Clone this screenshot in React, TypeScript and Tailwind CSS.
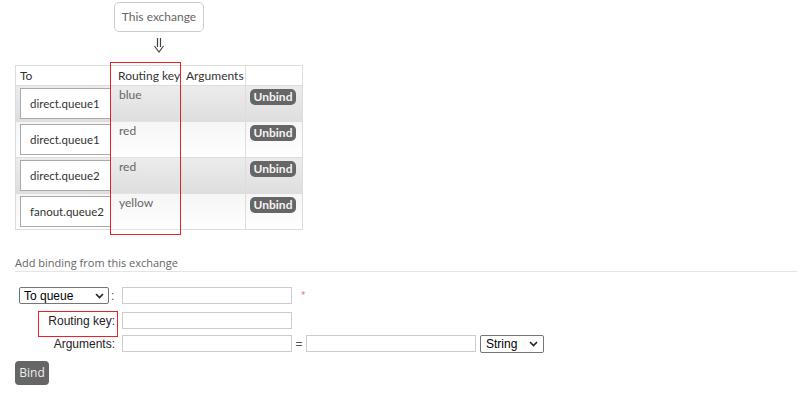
import React from "react";

const rows = [
  { q: "direct.queue1", k: "blue", alt: true },
  { q: "direct.queue1", k: "red", alt: false },
  { q: "direct.queue2", k: "red", alt: true },
  { q: "fanout.queue2", k: "yellow", alt: false },
];

function Chevron() {
  return (
    <svg width="9" height="6" viewBox="0 0 9 6" className="shrink-0">
      <path d="M1 1 L4.5 4.5 L8 1" fill="none" stroke="#222" strokeWidth="1.6" />
    </svg>
  );
}

function DoubleArrow() {
  return (
    <svg width="12" height="15" viewBox="0 0 12 15">
      <path d="M4.5 0 V9 M7.5 0 V9" stroke="#444" strokeWidth="1.2" fill="none" />
      <path d="M1.5 8 L6 14 L10.5 8" stroke="#444" strokeWidth="1.2" fill="none" />
    </svg>
  );
}

export default function App() {
  return (
    <div
      className="w-[801px] h-[396px] bg-white text-[#484848] relative overflow-hidden"
      style={{ fontFamily: 'Lato, "Open Sans", sans-serif' }}
    >
      <div className="pl-[15px] pt-[2px]">
        <div className="w-[288px] flex flex-col items-center">
          <div className="h-[30px] w-[90px] border border-[#ccc] rounded-[5px] flex items-center justify-center text-[12px] text-[#666] whitespace-nowrap">
            This exchange
          </div>
          <div className="h-[26px] flex items-center justify-center">
            <DoubleArrow />
          </div>
        </div>
        <div className="relative mt-[7px] w-[288px]">
          <table className="border-collapse table-fixed text-[12px] w-[287px]">
            <colgroup>
              <col className="w-[95px]" />
              <col className="w-[70px]" />
              <col className="w-[65px]" />
              <col className="w-[57px]" />
            </colgroup>
            <thead>
              <tr className="h-[20px] bg-white">
                <th className="text-left font-normal px-[4px] border border-[#ddd] text-[#333] whitespace-nowrap">To</th>
                <th className="text-left font-normal px-[7px] border border-[#ddd] text-[#333] whitespace-nowrap">Routing key</th>
                <th className="text-left font-normal px-[5px] border border-[#ddd] text-[#333] whitespace-nowrap">Arguments</th>
                <th className="border border-[#ddd]"></th>
              </tr>
            </thead>
            <tbody>
              {rows.map((r, i) => (
                <tr
                  key={i}
                  className={
                    r.alt
                      ? "h-[36px] bg-gradient-to-b from-[#ececec] to-[#dedede]"
                      : "h-[36px] bg-gradient-to-b from-[#f6f6f6] to-[#ffffff]"
                  }
                >
                  <td className="pl-[4px] pr-0 py-0 border-b border-l border-[#ddd]">
                    <div className="h-[31px] w-[91px] bg-white border border-[#aaa] flex items-center pl-[9px] text-[11.5px] text-[#333] whitespace-nowrap">
                      {r.q}
                    </div>
                  </td>
                  <td className="align-top pt-[1px] leading-[15px] px-[8px] border-b border-l border-[#e4e4e4] text-[#666]">{r.k}</td>
                  <td className="border-b border-[#ddd]"></td>
                  <td className="align-top pt-[2px] pl-[4px] border-b border-l border-r border-[#ddd]">
                    <span className="inline-flex items-center justify-center h-[16px] w-[46px] rounded-[5px] bg-[#666] text-[#f4f4f4] font-bold text-[12px]">
                      Unbind
                    </span>
                  </td>
                </tr>
              ))}
            </tbody>
          </table>
          <div className="absolute left-[95px] top-[-3px] w-[71px] h-[173px] border-[1.5px] border-[#e8202a] pointer-events-none" />
        </div>
      </div>

      <div className="pl-[15px] pr-[4px] mt-[25px]">
        <div className="text-[11px] text-[#666] pb-[1px] border-b border-[#e5e5e5] leading-[15px]" style={{ fontFamily: '"Open Sans", sans-serif' }}>
          Add binding from this exchange
        </div>
        <div
          className="mt-[15px] text-[12px] text-[#222]"
          style={{ fontFamily: '"Liberation Sans", Arial, sans-serif' }}
        >
          <div className="flex items-center h-[17px]">
            <div className="w-[107px] flex items-center pl-[4px]">
              <div className="w-[90px] h-[17px] border border-[#767676] rounded-[2px] flex items-center justify-between px-[4px] text-[12px] text-black">
                <span>To queue</span>
                <Chevron />
              </div>
              <span className="ml-[2px] text-[#555]">:</span>
            </div>
            <div className="w-[170px] h-[17px] border border-[#ccc]" />
            <span className="ml-[9px] text-[#f08080] text-[11px]">*</span>
          </div>
          <div className="flex items-center h-[17px] mt-[8px]">
            <div className="w-[107px] flex justify-end pr-[7px] text-[12px] relative">
              <span>Routing key:</span>
              <div className="absolute left-[23px] top-[-1px] w-[80px] h-[26px] border border-[#e8202a]" />
            </div>
            <div className="w-[170px] h-[17px] border border-[#ccc]" />
          </div>
          <div className="flex items-center h-[17px] mt-[6px]">
            <div className="w-[107px] flex justify-end pr-[7px] text-[12px]">
              <span>Arguments:</span>
            </div>
            <div className="w-[170px] h-[17px] border border-[#ccc]" />
            <span className="w-[14px] text-center text-[#555]">=</span>
            <div className="w-[170px] h-[17px] border border-[#ccc]" />
            <div className="ml-[4px] w-[64px] h-[18px] border border-[#767676] rounded-[2px] flex items-center justify-between px-[5px] text-[12px] text-black">
              <span>String</span>
              <Chevron />
            </div>
          </div>
          <div
            className="mt-[9px] w-[34px] h-[24px] rounded-[4px] bg-[#666] text-[#eee] text-[12px] flex items-center justify-center"
            style={{ fontFamily: '"Open Sans", sans-serif' }}
          >
            Bind
          </div>
        </div>
      </div>
    </div>
  );
}
